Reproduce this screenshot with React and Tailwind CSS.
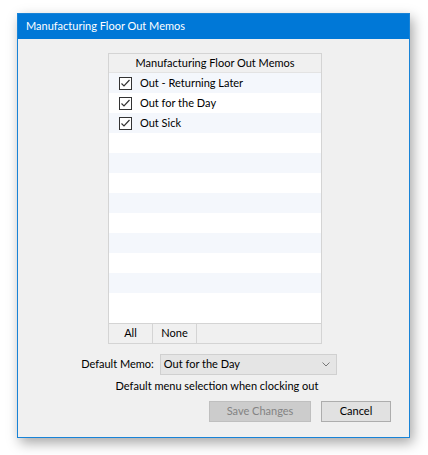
import React from 'react';

const memos = ['Out - Returning Later', 'Out for the Day', 'Out Sick'];

const Check = () => (
  <svg width="13" height="13" viewBox="0 0 13 13" className="shrink-0">
    <rect x="0.5" y="0.5" width="12" height="12" fill="#fff" stroke="#333" />
    <path d="M2.5 6.5 L5 9 L10.5 3" fill="none" stroke="#333" strokeWidth="1.2" />
  </svg>
);

export default function App() {
  const rows = Array.from({ length: 12 });
  return (
    <div className="w-[428px] h-[455px] bg-white pt-[13px] pl-[17px]" style={{ fontFamily: 'Lato, "Noto Sans", sans-serif' }}>
      <div className="w-[393px] h-[425px] flex flex-col border border-[#1883d7] shadow-[3px_5px_12px_rgba(0,0,0,0.35)]">
        {/* Title bar */}
        <div className="h-[25px] bg-[#0078d7] text-white text-[11px] flex items-center pl-[8px] shrink-0">
          Manufacturing Floor Out Memos
        </div>
        {/* Body */}
        <div className="flex-1 bg-[#f0f0f0] flex flex-col items-center pt-[14px] text-[11px] text-black">
          {/* List table */}
          <div className="w-[214px] h-[291px] border border-[#d4d4d4] bg-white flex flex-col ml-[3px]">
            <div className="h-[19px] bg-[#f0f0f0] border-b border-[#e3e3e3] flex items-center justify-center shrink-0">
              Manufacturing Floor Out Memos
            </div>
            <div className="flex-1 overflow-hidden">
              {rows.map((_, i) => (
                <div key={i} className={`h-[20px] flex items-center pl-[10px] gap-[8px] ${i % 2 === 0 ? 'bg-[#f4f7fc]' : 'bg-white'}`}>
                  {memos[i] && (
                    <>
                      <Check />
                      <span>{memos[i]}</span>
                    </>
                  )}
                </div>
              ))}
            </div>
            <div className="h-[20px] bg-[#f0f0f0] border-t border-[#d4d4d4] flex shrink-0">
              <div className="w-[44px] border-r border-[#d4d4d4] flex items-center justify-center">All</div>
              <div className="w-[44px] border-r border-[#d4d4d4] flex items-center justify-center">None</div>
            </div>
          </div>
          {/* Default memo */}
          <div className="flex items-center mt-[10px] ml-[-9px]">
            <span className="mr-[6px]">Default Memo:</span>
            <div className="w-[177px] h-[21px] bg-[#e5e5e5] border border-[#d0d0d0] flex items-center justify-between pl-[3px] pr-[6px]">
              <span>Out for the Day</span>
              <svg width="8" height="5" viewBox="0 0 8 5"><path d="M0.5 0.5 L4 4 L7.5 0.5" fill="none" stroke="#777" /></svg>
            </div>
          </div>
          <div className="mt-[2px] h-[18px] flex items-center ml-[7px]">Default menu selection when clocking out</div>
          {/* Buttons */}
          <div className="w-full flex justify-end gap-[10px] pr-[18px] mt-[6px]">
            <div className="w-[102px] h-[21px] bg-[#cccccc] border border-[#bfbfbf] text-[#838383] flex items-center justify-center">Save Changes</div>
            <div className="w-[70px] h-[21px] bg-[#e1e1e1] border border-[#adadad] flex items-center justify-center">Cancel</div>
          </div>
        </div>
      </div>
    </div>
  );
}
